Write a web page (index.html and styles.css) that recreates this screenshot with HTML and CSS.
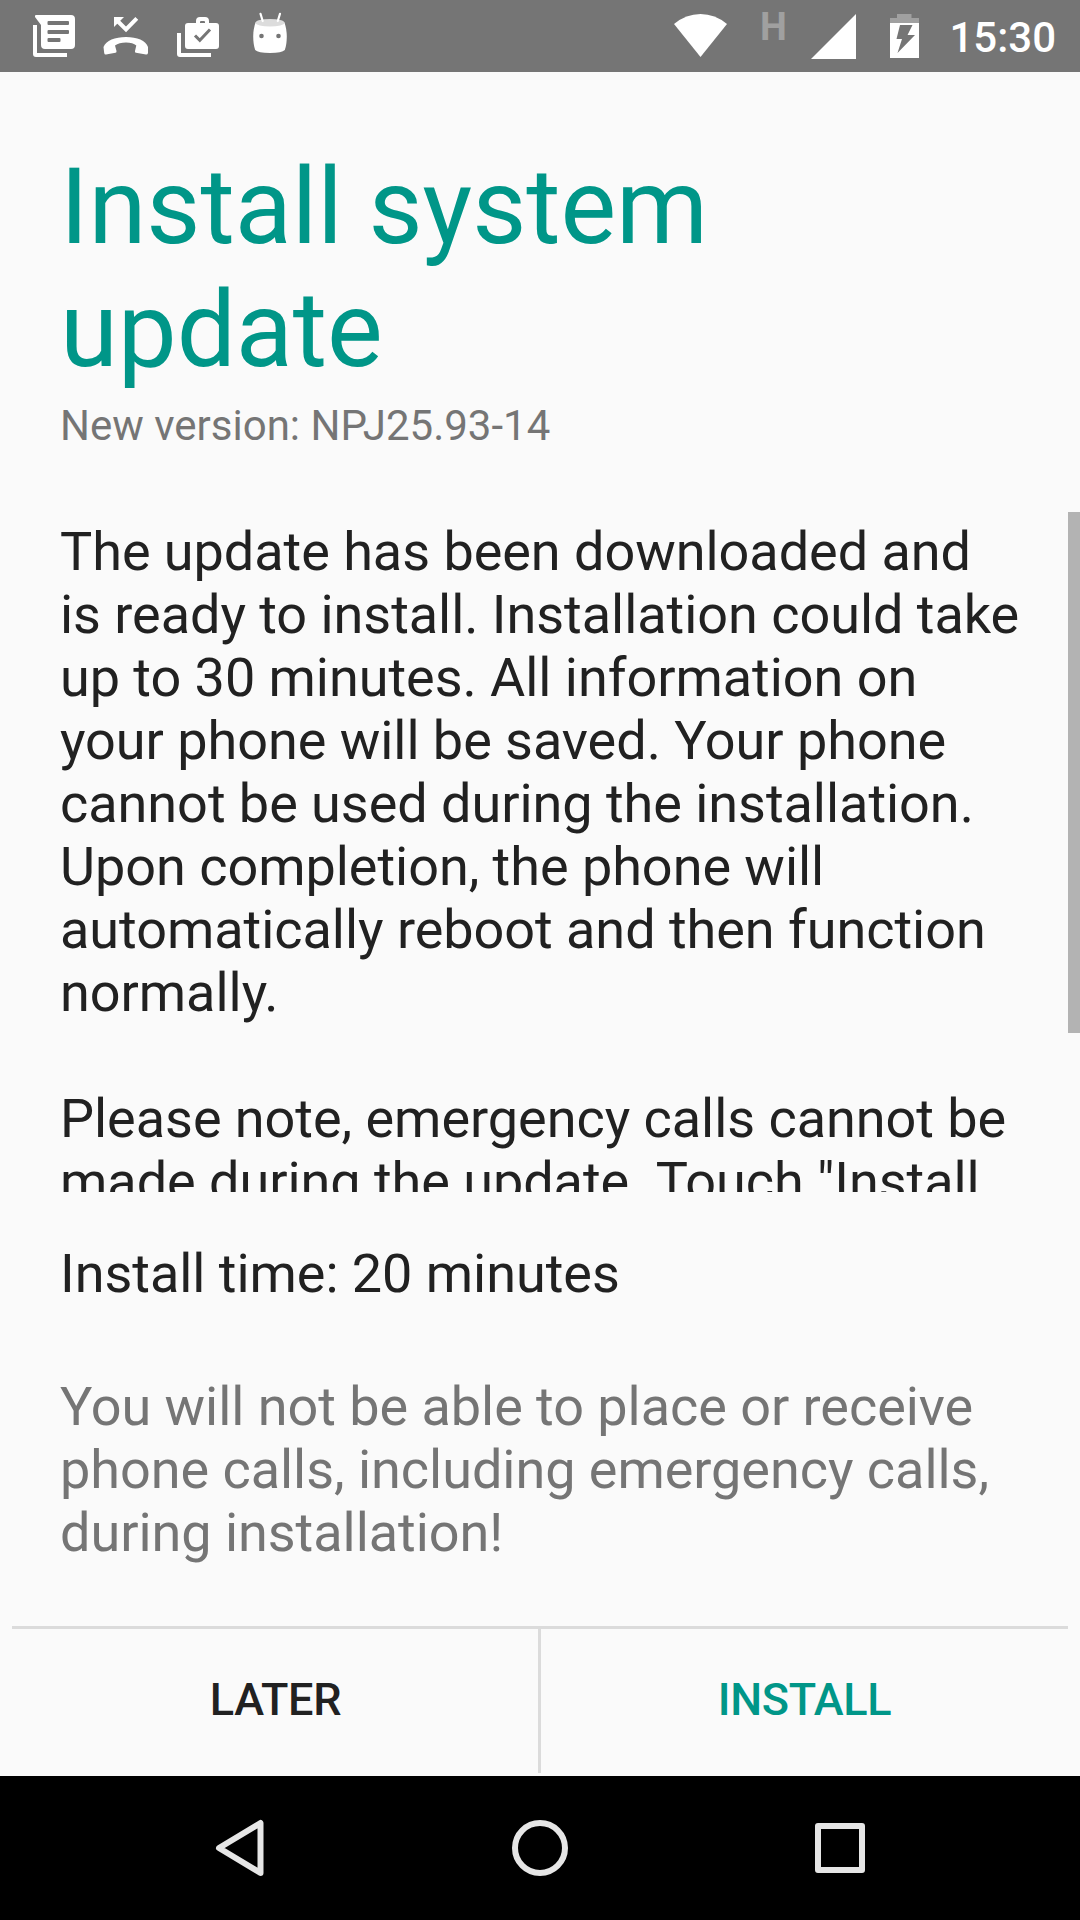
FILE: index.html
```html
<!DOCTYPE html>
<html lang="en">
<head>
<meta charset="utf-8">
<title>Install system update</title>
<link rel="stylesheet" href="styles.css">
</head>
<body>
<div class="screen">
  <header class="status">
    <div class="notifications">
      <svg class="icon" viewBox="0 0 48 48"><path d="M3 13H7V41H37V45H6Q3 45 3 42Z"/><path fill-rule="evenodd" d="M6 3H41Q45 3 45 7V33Q45 37 41 37H15Q11 37 11 33V13L5 5Q4.500 3 6 3ZM18.500 9Q17.500 9 17.500 10V12Q17.500 13 18.500 13H38Q39 13 39 12V10Q39 9 38 9ZM18.500 18Q17.500 18 17.500 19V21Q17.500 22 18.500 22H38Q39 22 39 21V19Q39 18 38 18ZM18.500 26Q17.500 26 17.500 27V29Q17.500 30 18.500 30H29.500Q30.500 30 30.500 29V27Q30.500 26 29.500 26Z"/></svg>
      <svg class="icon" viewBox="0 0 48 48"><path d="M12 5H22L12 15Z"/><path class="line" d="M15 8.500L24 17.500L34.800 6.300"/><path d="M1.500 35C4 28.500 13 25 24 25S44 28.500 46 35V41Q45.500 42.800 44 42.500L34 40.800Q32.500 40.500 33 39L34.300 33.500Q31 30.500 24 30.500T13 33.500L14.500 39Q14.800 40.500 13.500 40.800L4 42.500Q2.500 42.800 2.200 41Z"/></svg>
      <svg class="icon" viewBox="0 0 48 48"><path d="M3 21H7V41H37V45H6Q3 45 3 42Z"/><path fill-rule="evenodd" d="M14 11H22V9Q22 5 26 5H31Q35 5 35 9V11H42Q45 11 45 14V34Q45 37 42 37H14Q11 37 11 34V14Q11 11 14 11ZM26 11H31V10Q31 9 30 9H27Q26 9 26 10Z"/><path class="check" d="M21 23.500L25.800 28.300L36 17.500"/></svg>
      <svg class="icon" viewBox="0 0 48 48"><path d="M9.500 10.500H38.500C41.500 19 41.500 30 38.800 38Q36 41 24 41T9.200 38C6.500 30 6.500 19 9.500 10.500Z"/><ellipse class="lid" cx="24" cy="10.700" rx="14.500" ry="3.800"/><path class="antenna" d="M14.500 1.800L16.700 9M34 1.800L31.800 9"/><circle class="eye" cx="15.500" cy="24" r="2.300"/><circle class="eye" cx="32.500" cy="24" r="2.300"/></svg>
    </div>
    <div class="system">
      <svg class="wifi" viewBox="0 0 54 72"><path d="M0 24Q12 14 26.500 14T53 24L26.500 57Z"/></svg>
      <span class="network">H</span>
      <svg class="signal" viewBox="0 0 45 72"><path d="M0 59L45 14V59Z"/></svg>
      <svg class="battery" viewBox="0 0 29 72"><path class="cap" d="M0 18H7V14H21.500V18H29V24H0Z"/><path d="M0 23H29V58H0Z"/><path class="bolt" d="M10 25H22.500L17.500 35H25L7.500 53L12 39H6.500Z"/></svg>
      <span class="clock">15:30</span>
    </div>
  </header>
  <main class="content">
    <h1 class="title">Install system<br>update</h1>
    <p class="version">New version: NPJ25.93-14</p>
    <div class="scroll">
      <p class="body message">The update has been downloaded and<br>is ready to install. Installation could take<br>up to 30 minutes. All information on<br>your phone will be saved. Your phone<br>cannot be used during the installation.<br>Upon completion, the phone will<br>automatically reboot and then function<br>normally.<br><br>Please note, emergency calls cannot be<br>made during the update. Touch "Install</p>
      <div class="thumb"></div>
    </div>
    <p class="body time">Install time: 20 minutes</p>
    <p class="body warning">You will not be able to place or receive<br>phone calls, including emergency calls,<br>during installation!</p>
  </main>
  <div class="actions">
    <button class="action">LATER</button>
    <div class="divider"></div>
    <button class="action primary">INSTALL</button>
  </div>
  <nav class="nav">
    <svg class="key" viewBox="0 0 60 60"><path d="M9 30L50.500 5V55Z"/></svg>
    <svg class="key" viewBox="0 0 60 60"><circle cx="30" cy="30" r="25"/></svg>
    <svg class="key" viewBox="0 0 60 60"><rect x="8" y="8" width="44" height="44"/></svg>
  </nav>
</div>
</body>
</html>
```
FILE: styles.css
```css
* { box-sizing: border-box; }
body { margin: 0; font-family: Roboto, sans-serif; background: #fafafa; }
p, h1 { margin: 0; font-weight: 400; }
.screen { width: 1080px; height: 1920px; display: flex; flex-direction: column; overflow: hidden; }

.status { height: 72px; background: #757575; color: #fff; fill: #fff; display: flex; justify-content: space-between; padding: 0 24px 0 30px; }
.notifications { display: flex; gap: 24px; padding-top: 12px; }
.icon { width: 48px; height: 48px; }
.line { fill: none; stroke: #fff; stroke-width: 4; }
.check { fill: none; stroke: #757575; stroke-width: 3; }
.lid { fill: #dcdcdc; }
.antenna { fill: none; stroke: #fff; stroke-width: 2.2; stroke-linecap: round; }
.eye, .bolt { fill: #757575; }
.cap { fill: #a0a0a0; }
.system { display: flex; width: 382px; }
.wifi { width: 54px; height: 72px; }
.network { width: 27px; margin: 8px 24px 0 32px; font-size: 38px; line-height: 38px; font-weight: 700; color: #a0a0a0; }
.signal { width: 45px; height: 72px; }
.battery { width: 29px; height: 72px; margin-left: 34px; }
.clock { margin-left: auto; padding-top: 2px; font-size: 42px; line-height: 72px; font-weight: 500; }

.content { flex: 1; padding-top: 74px; }
.title { font-size: 105px; line-height: 123px; letter-spacing: -.1px; color: #009688; padding-left: 60px; }
.version { font-size: 42px; line-height: 49px; color: #757575; padding: 0 60px; margin-top: 9px; }
.scroll { height: 680px; margin-top: 62px; overflow: hidden; display: flex; justify-content: space-between; }
.body { font-size: 54px; line-height: 63px; letter-spacing: -.04px; color: #212121; padding-left: 60px; white-space: nowrap; }
.message { padding-top: 8px; }
.thumb { width: 12px; height: 521px; background: #b3b3b3; }
.time { margin-top: 50px; }
.warning { margin-top: 70px; color: #757575; }

.actions { height: 150px; display: flex; margin: 0 12px; border-top: 3px solid #dbdbdb; }
.action { width: 526px; border: 0; padding: 0 0 7px 1px; background: none; font: 500 45px Roboto, sans-serif; letter-spacing: -.3px; color: #212121; }
.divider { width: 3px; height: 144px; background: #dbdbdb; }
.primary { color: #009688; }

.nav { height: 144px; background: #000; display: flex; justify-content: space-between; align-items: center; padding: 0 210px; }
.key { width: 60px; height: 60px; fill: none; stroke: #e6e6e6; stroke-width: 6; stroke-linejoin: round; }
```
